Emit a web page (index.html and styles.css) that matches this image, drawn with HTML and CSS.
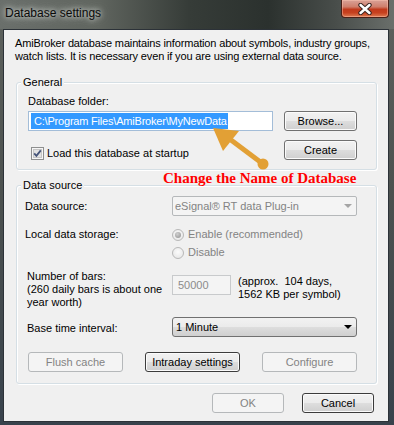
FILE: index.html
```html
<!DOCTYPE html>
<html>

<head>
  <meta charset="utf-8">
  <meta name="viewport" content="width=device-width">
  <title>Database settings</title>
  <link rel="stylesheet" href="styles.css">
</head>

<body>
  <div class="window">
    <div class="titlebar">
      <span class="title">Database settings</span>
      <button class="close-btn" aria-label="Close">
        <svg width="14" height="12" viewBox="0 0 14 12">
          <path d="M2.5 2 L11.5 10 M11.5 2 L2.5 10" stroke="#3b2622" stroke-width="4.4" stroke-linecap="round" fill="none"/>
          <path d="M2.5 2 L11.5 10 M11.5 2 L2.5 10" stroke="#ffffff" stroke-width="2.4" stroke-linecap="round" fill="none"/>
        </svg>
      </button>
    </div>

    <div class="client">
      <p class="intro">AmiBroker database maintains information about symbols, industry groups,<br>watch lists. It is necessary even if you are using external data source.</p>

      <fieldset class="group group-general">
        <legend>General</legend>
        <div class="folder-grid">
          <label class="folder-label">Database folder:</label>
          <span class="spacer"></span>
          <div class="textbox path-box"><span class="selected">C:\Program Files\AmiBroker\MyNewData</span></div>
          <button class="btn">Browse...</button>
          <label class="check">
            <svg width="13" height="13" viewBox="0 0 13 13">
              <rect x="0.5" y="0.5" width="12" height="12" fill="#f6f6f6" stroke="#8e8f8f"/>
              <rect x="2.5" y="2.5" width="8" height="8" fill="#e2e2e2" stroke="#c6c6c6"/>
              <path d="M3.2 6.4 L5.4 8.8 L9.8 3.4" fill="none" stroke="#46557a" stroke-width="1.8"/>
            </svg>
            Load this database at startup
          </label>
          <button class="btn">Create</button>
        </div>
      </fieldset>

      <fieldset class="group group-source">
        <legend>Data source</legend>

        <div class="field-row row-source">
          <span class="row-label">Data source:</span>
          <div class="combo combo-disabled">
            <span>eSignal&reg; RT data Plug-in</span>
            <span class="combo-arrow"></span>
          </div>
        </div>

        <div class="field-row row-storage">
          <span class="row-label">Local data storage:</span>
          <div class="radio-list">
            <label class="radio-option"><span class="radio checked"></span>Enable (recommended)</label>
            <label class="radio-option"><span class="radio"></span>Disable</label>
          </div>
        </div>

        <div class="field-row row-bars">
          <span class="row-label indent">Number of bars:<br>(260 daily bars is about one<br>year worth)</span>
          <div class="bars-control">
            <div class="textbox bars-box">50000</div>
            <span class="bars-note">(approx. &nbsp;104 days,<br>1562 KB per symbol)</span>
          </div>
        </div>

        <div class="field-row row-interval">
          <span class="row-label indent">Base time interval:</span>
          <div class="combo">
            <span>1 Minute</span>
            <span class="combo-arrow"></span>
          </div>
        </div>

        <div class="source-buttons">
          <button class="btn btn-disabled">Flush cache</button>
          <button class="btn btn-strong">Intraday settings</button>
          <button class="btn btn-disabled">Configure</button>
        </div>
      </fieldset>

      <div class="dialog-buttons">
        <button class="btn btn-disabled">OK</button>
        <button class="btn btn-strong">Cancel</button>
      </div>

      <!-- annotation drawn over the dialog -->
      <span class="note">Change the Name of Database</span>
      <svg class="arrow" width="70" height="55" viewBox="0 0 70 55">
        <path d="M26 20 L58 44" stroke="#e2a035" stroke-width="5" fill="none"/>
        <path d="M8 8 L34 11 L18 31 Z" fill="#e2a035"/>
        <circle cx="58" cy="44" r="5.5" fill="#e2a035"/>
      </svg>
    </div>
  </div>
</body>

</html>
```

FILE: styles.css
```css
body {
  margin: 0;
  font-family: "Liberation Sans", Arial, sans-serif;
  font-size: 11px;
  color: #000;
  background-color: #3a4048;
}

.window {
  width: 394px;
  height: 425px;
  display: flex;
  flex-direction: column;
  background: linear-gradient(to bottom, #5e625e 0%, #4c514f 45%, #38424c 100%);
  overflow: hidden;
}

/* title bar */
.titlebar {
  height: 29px;
  flex: none;
  display: flex;
  justify-content: space-between;
  align-items: flex-start;
  background: linear-gradient(to right, #6a6f6b 0%, #60655f 25%, #363c38 48%, #2b312e 68%, #484d4a 85%, #6a6f6b 100%);
}

.title {
  margin: 6px 0 0 5px;
  font-size: 12px;
  line-height: 14px;
  color: #0a0a0a;
  text-shadow: 0 0 5px #e6eae6, 0 0 10px rgba(220, 226, 220, 0.8);
}

.close-btn {
  width: 48px;
  height: 18px;
  margin-right: 5px;
  padding: 0;
  border: 1px solid #4a1f16;
  border-top: none;
  border-radius: 0 0 4px 4px;
  background: linear-gradient(to bottom, #d9a297 0%, #cf7f6c 40%, #c13a1c 55%, #c7411f 75%, #dc7b52 100%);
  box-shadow: inset 0 0 0 1px rgba(255, 200, 180, 0.45);
  display: flex;
  align-items: center;
  justify-content: center;
}

/* dialog body */
.client {
  flex: 1;
  position: relative;
  display: flex;
  flex-direction: column;
  margin: 0 5px 3px 3px;
  padding: 0 11px 0 12px;
  border: 1px solid #2c3238;
  background-color: #f0f0f0;
}

.intro {
  margin: 7px 0 0 -1px;
  line-height: 13px;
  letter-spacing: -0.15px;
  white-space: nowrap;
}

.group {
  margin: 0;
  border: 1px solid #d5dfe5;
  border-radius: 3px;
  box-shadow: inset 1px 1px 0 #ffffff, 1px 1px 0 #ffffff;
  min-width: 0;
}

.group legend {
  padding: 0 2px;
  line-height: 13px;
  background-color: #f0f0f0;
}

.group-general {
  margin-top: 13px;
  padding: 6px 19px 9px 11px;
}

.group-general legend {
  margin-left: -7px;
}

.group-source {
  margin-top: 9px;
  padding: 4px 19px 11px 8px;
}

.group-source legend {
  margin-left: -4px;
}

/* general */
.folder-grid {
  display: grid;
  grid-template-columns: 245px 73px;
  column-gap: 11px;
  align-items: center;
}

.folder-label {
  line-height: 13px;
  margin-bottom: 3px;
}

.check {
  display: flex;
  align-items: center;
  gap: 3px;
  margin-left: 3px;
  line-height: 13px;
  align-self: end;
  margin-top: 9px;
}

.check svg {
  flex: none;
}

.textbox {
  box-sizing: border-box;
  height: 20px;
  border: 1px solid #abadb3;
  background-color: #ffffff;
}

.path-box {
  display: flex;
  align-items: center;
  padding-left: 2px;
  border-color: #a3bdd8;
}

.selected {
  display: inline-block;
  line-height: 16px;
  padding: 0 1px 0 3px;
  letter-spacing: -0.2px;
  background-color: #3399ff;
  color: #ffffff;
  white-space: nowrap;
}

/* buttons */
.btn {
  box-sizing: border-box;
  height: 20px;
  padding: 0;
  font-family: inherit;
  font-size: 11px;
  color: #000;
  border: 1px solid #707070;
  border-radius: 3px;
  background: linear-gradient(to bottom, #f2f2f2 0%, #ebebeb 48%, #dddddd 52%, #cfcfcf 100%);
  box-shadow: inset 0 0 0 1px #fbfbfb;
}

.folder-grid .btn + .check + .btn {
  margin-top: 9px;
}

.btn-strong {
  border-color: #3c3c3c;
}

.btn-disabled {
  color: #838383;
  border-color: #b5b8ba;
  background: #f4f4f4;
  box-shadow: none;
}

/* data source rows */
.field-row {
  display: grid;
  grid-template-columns: 147px 185px;
  align-items: center;
}

.row-label {
  line-height: 13px;
  white-space: nowrap;
}

.indent {
  padding-left: 2px;
}

.combo {
  box-sizing: border-box;
  height: 20px;
  display: flex;
  align-items: center;
  justify-content: space-between;
  padding: 0 4px 0 3px;
  border: 1px solid #707070;
  border-radius: 3px;
  background: linear-gradient(to bottom, #f2f2f2 0%, #ebebeb 48%, #dddddd 52%, #cfcfcf 100%);
}

.combo-arrow {
  width: 0;
  height: 0;
  border-left: 4px solid transparent;
  border-right: 4px solid transparent;
  border-top: 4px solid #000000;
}

.combo-disabled {
  padding-left: 2px;
  color: #838383;
  border-color: #b5b8ba;
  border-radius: 2px;
  background: #f4f4f4;
}

.combo-disabled .combo-arrow {
  border-top-color: #a5a5a5;
}

.row-storage {
  margin-top: 12px;
  align-items: start;
}

.radio-list {
  display: flex;
  flex-direction: column;
  gap: 5px;
}

.radio-option {
  display: flex;
  align-items: center;
  gap: 4px;
  line-height: 13px;
  color: #838383;
}

.radio {
  box-sizing: border-box;
  width: 12px;
  height: 12px;
  border: 1px solid #b8b8b8;
  border-radius: 50%;
  background: radial-gradient(circle at 50% 40%, #fbfbfb, #e3e3e3);
  display: flex;
  align-items: center;
  justify-content: center;
}

.radio.checked::after {
  content: "";
  width: 6px;
  height: 6px;
  border-radius: 50%;
  background: radial-gradient(circle at 40% 35%, #d0d0d0, #8f8f8f);
}

.row-bars {
  margin-top: 11px;
  align-items: start;
}

.bars-control {
  display: flex;
  gap: 7px;
}

.bars-box {
  width: 59px;
  margin-top: 5px;
  padding-left: 5px;
  line-height: 18px;
  color: #8b8b8b;
  border-color: #c8cacc;
  background-color: #f4f4f4;
}

.bars-note {
  margin-top: 5px;
  line-height: 13px;
  white-space: nowrap;
}

.row-interval {
  margin-top: 8px;
  align-items: start;
}

.row-interval .row-label {
  margin-top: 5px;
}

.source-buttons {
  display: grid;
  grid-template-columns: 95px 95px 95px;
  justify-content: space-between;
  margin: 15px 0 0 3px;
}

.dialog-buttons {
  display: flex;
  justify-content: flex-end;
  gap: 18px;
  margin: 9px 3px 0 0;
}

.dialog-buttons .btn {
  width: 72px;
}

/* annotation on top */
.note {
  position: absolute;
  left: 159px;
  top: 141px;
  font-family: "Liberation Serif", "Times New Roman", serif;
  font-weight: bold;
  font-size: 15px;
  line-height: 15px;
  color: #ff0000;
  white-space: nowrap;
}

.arrow {
  position: absolute;
  left: 201px;
  top: 90px;
}
```
